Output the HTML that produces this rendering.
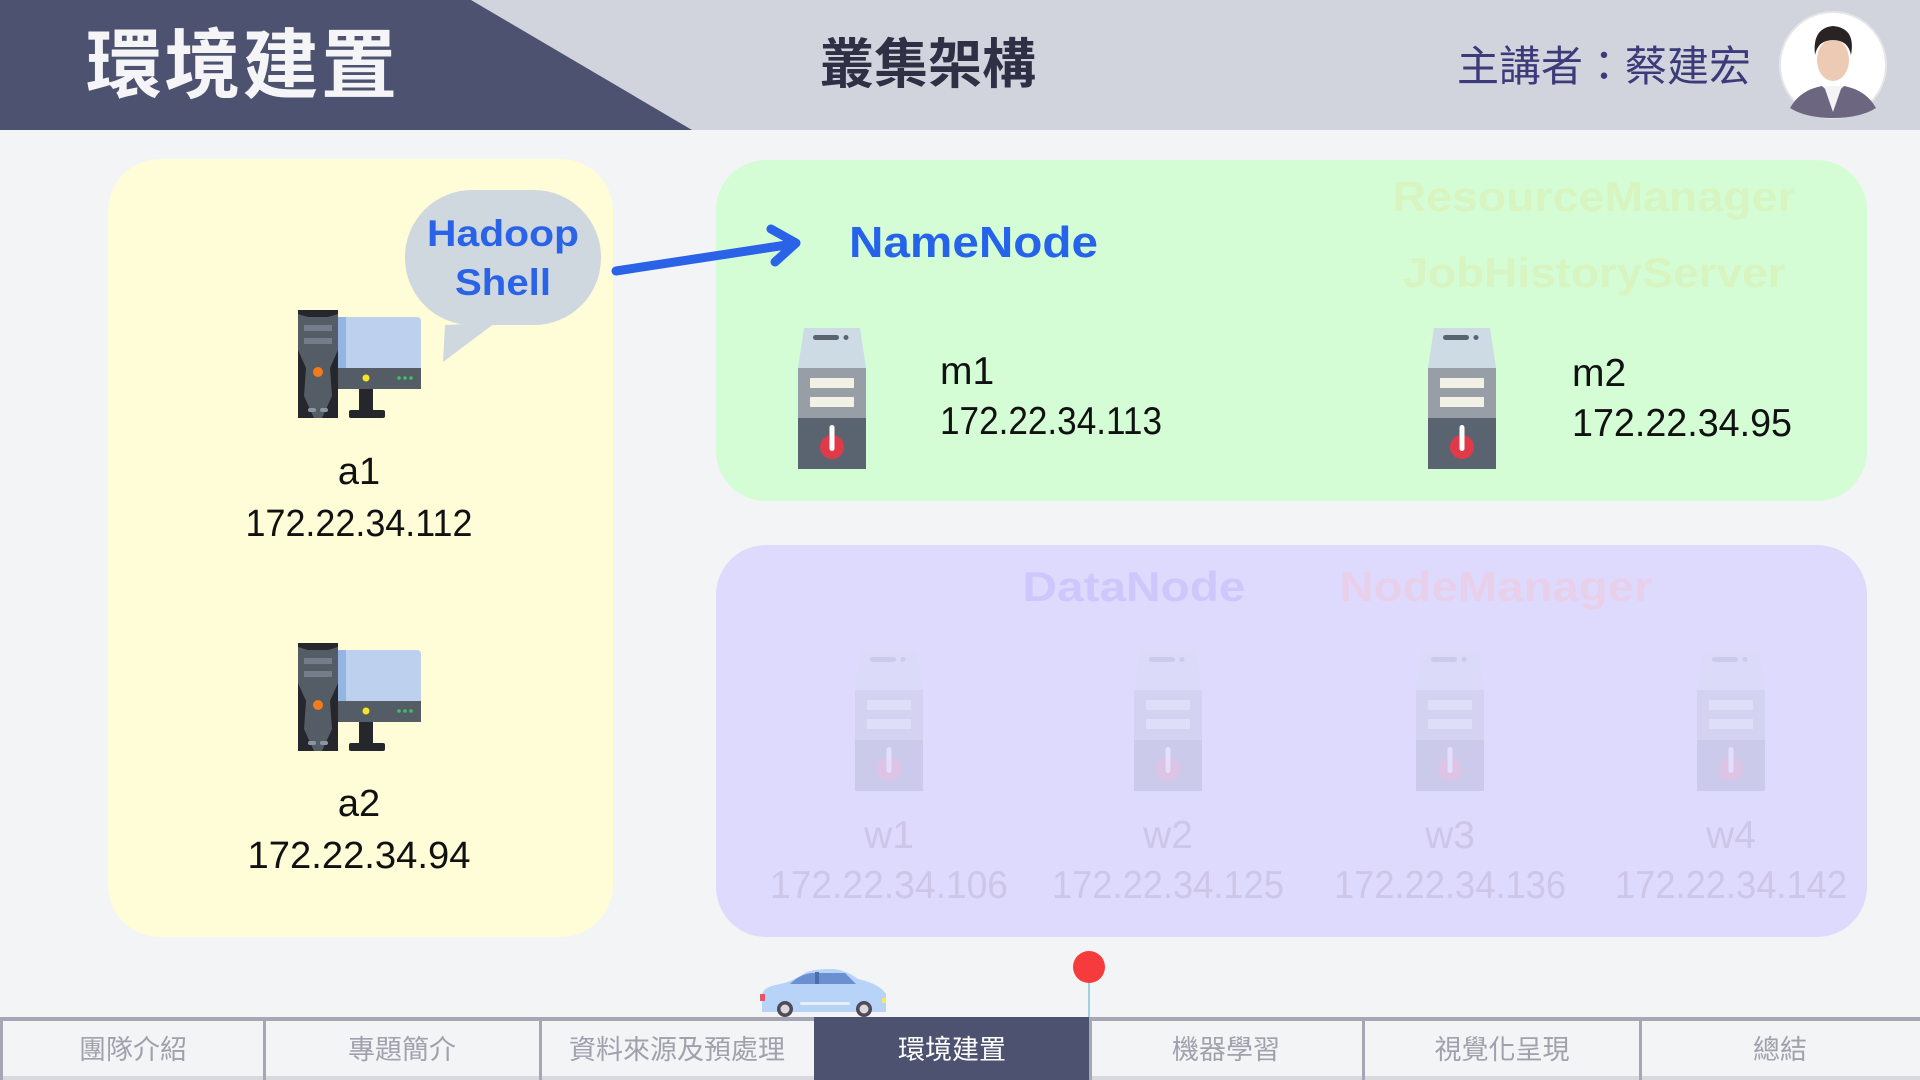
<!DOCTYPE html>
<html><head><meta charset="utf-8"><style>
html,body{margin:0;padding:0;width:1920px;height:1080px;overflow:hidden;background:#f3f4f6}
svg{display:block}
.cjk{font-family:"Liberation Sans","Noto Sans CJK TC",sans-serif}
.lat{font-family:"Liberation Sans",sans-serif}
</style></head><body>
<svg width="1920" height="1080" viewBox="0 0 1920 1080" xmlns="http://www.w3.org/2000/svg">
<defs>
<symbol id="srv" viewBox="0 0 68 141">
<path d="M6 0H62L68 40H0Z" fill="#cddbe4"/>
<rect x="15" y="7" width="26" height="5" rx="2.5" fill="#5a6370"/>
<circle cx="48" cy="9.5" r="2.5" fill="#5a6370"/>
<rect x="0" y="40" width="68" height="50" fill="#979ea6"/>
<rect x="12" y="50" width="44" height="10" fill="#f1f1e6"/>
<rect x="12" y="69" width="44" height="10" fill="#f1f1e6"/>
<rect x="0" y="90" width="68" height="51" fill="#5a6370"/>
<circle cx="34" cy="119" r="12" fill="#e03a48"/>
<rect x="31.5" y="97" width="5" height="26" rx="2.5" fill="#fff"/>
</symbol>
<symbol id="pc" viewBox="0 0 123 108">
<rect x="40" y="7" width="83" height="72" rx="4" fill="#bdd0ee"/>
<rect x="40" y="7" width="8" height="52" fill="#94b4e2"/>
<rect x="40" y="58" width="83" height="21" fill="#545c66"/>
<circle cx="68" cy="68" r="3.5" fill="#f5e52a"/>
<circle cx="101" cy="68" r="1.8" fill="#3fc06a"/><circle cx="107" cy="68" r="1.8" fill="#3fc06a"/><circle cx="113" cy="68" r="1.8" fill="#3fc06a"/>
<rect x="61" y="79" width="14" height="21" fill="#25272c"/>
<rect x="51" y="100" width="36" height="8" rx="2" fill="#25272c"/>
<rect x="0" y="0" width="40" height="108" rx="2" fill="#545c66"/>
<path d="M0 0H40V4L30 7H10L0 4Z" fill="#25272c"/>
<path d="M0 40L8 58L6 86L16 108H0Z" fill="#25272c"/>
<path d="M40 40L32 58L34 86L24 108H40Z" fill="#25272c"/>
<rect x="6" y="15" width="28" height="6" fill="#747d89"/>
<rect x="6" y="28" width="28" height="6" fill="#747d89"/>
<circle cx="20" cy="62" r="5" fill="#f57a1c"/>
<rect x="10" y="98" width="8" height="4" rx="2" fill="#8c95a3"/><rect x="22" y="98" width="8" height="4" rx="2" fill="#8c95a3"/>
</symbol>
</defs>

<rect x="0" y="0" width="1920" height="130" fill="#d1d4dc"/>
<path d="M0 0H471L692 130H0Z" fill="#4d5270"/>
<text x="86" y="92" class="cjk" font-size="76" font-weight="bold" fill="#f5f5f7" textLength="313" letter-spacing="2">環境建置</text>
<text x="928" y="83" class="cjk" font-size="54" font-weight="bold" fill="#2f2f45" text-anchor="middle">叢集架構</text>
<text x="1457" y="81" class="cjk" font-size="42" fill="#3d3a7a">主講者：蔡建宏</text>
<circle cx="1833" cy="65" r="53" fill="#ffffff" stroke="#e6e6ea" stroke-width="2"/>
<path d="M1790 108Q1800 90 1822 86L1833 96L1844 86Q1866 90 1876 108Q1860 118 1833 118Q1806 118 1790 108Z" fill="#6d6680"/>
<path d="M1824 86L1833 112L1842 86Z" fill="#f4f4f6"/>
<ellipse cx="1833" cy="60" rx="16" ry="21" fill="#eccab4"/>
<path d="M1815 55Q1812 28 1833 26Q1856 28 1851 55Q1848 40 1833 40Q1818 40 1815 55Z" fill="#2a2324"/>

<rect x="108" y="159" width="505" height="778" rx="52" fill="#fefdd8"/>
<rect x="716" y="160" width="1151" height="341" rx="50" fill="#d4fdd6"/>
<rect x="716" y="545" width="1151" height="392" rx="50" fill="#dedafd"/>

<path d="M445 325L443 362L495 323Z" fill="#cfd8de"/>
<rect x="405" y="190" width="196" height="135" rx="67" fill="#cfd8de"/>
<text x="503" y="246" class="lat" font-size="37" font-weight="bold" fill="#2a63e8" text-anchor="middle" textLength="152" lengthAdjust="spacingAndGlyphs">Hadoop</text>
<text x="503" y="295" class="lat" font-size="37" font-weight="bold" fill="#2a63e8" text-anchor="middle" textLength="96" lengthAdjust="spacingAndGlyphs">Shell</text>
<path d="M616 271L793 244M771 229L796 243L775 262" stroke="#2a63e8" stroke-width="9" fill="none" stroke-linecap="round" stroke-linejoin="round"/>

<use href="#pc" x="298" y="310" width="123" height="108"/>
<text x="359" y="484" class="lat" font-size="38" fill="#111" text-anchor="middle">a1</text>
<text x="359" y="536" class="lat" font-size="38" fill="#111" text-anchor="middle" textLength="227" lengthAdjust="spacingAndGlyphs">172.22.34.112</text>
<use href="#pc" x="298" y="643" width="123" height="108"/>
<text x="359" y="816" class="lat" font-size="38" fill="#111" text-anchor="middle">a2</text>
<text x="359" y="868" class="lat" font-size="38" fill="#111" text-anchor="middle" textLength="223" lengthAdjust="spacingAndGlyphs">172.22.34.94</text>

<text x="849" y="257" class="lat" font-size="44" font-weight="bold" fill="#2563eb" textLength="249" lengthAdjust="spacingAndGlyphs">NameNode</text>
<text x="1594" y="211" class="lat" font-size="42" font-weight="bold" fill="#d8f4c0" text-anchor="middle" textLength="403" lengthAdjust="spacingAndGlyphs">ResourceManager</text>
<text x="1594" y="287" class="lat" font-size="42" font-weight="bold" fill="#d8f4c0" text-anchor="middle" textLength="383" lengthAdjust="spacingAndGlyphs">JobHistoryServer</text>
<use href="#srv" x="798" y="328" width="68" height="141"/>
<text x="940" y="384" class="lat" font-size="39" fill="#111">m1</text>
<text x="940" y="434" class="lat" font-size="39" fill="#111" textLength="222" lengthAdjust="spacingAndGlyphs">172.22.34.113</text>
<use href="#srv" x="1428" y="328" width="68" height="141"/>
<text x="1572" y="386" class="lat" font-size="39" fill="#111">m2</text>
<text x="1572" y="436" class="lat" font-size="39" fill="#111" textLength="220" lengthAdjust="spacingAndGlyphs">172.22.34.95</text>

<text x="1134" y="601" class="lat" font-size="42" font-weight="bold" fill="#ccc8fc" text-anchor="middle" textLength="223" lengthAdjust="spacingAndGlyphs">DataNode</text>
<text x="1496" y="601" class="lat" font-size="42" font-weight="bold" fill="#e8d0ea" text-anchor="middle" textLength="313" lengthAdjust="spacingAndGlyphs">NodeManager</text>
<g opacity="0.13">
<use href="#srv" x="855" y="650" width="68" height="141"/>
<use href="#srv" x="1134" y="650" width="68" height="141"/>
<use href="#srv" x="1416" y="650" width="68" height="141"/>
<use href="#srv" x="1697" y="650" width="68" height="141"/>
</g>
<g class="lat" font-size="39" fill="#cdc6e6" text-anchor="middle" lengthAdjust="spacingAndGlyphs">
<text x="889" y="848">w1</text><text x="889" y="898" textLength="238" lengthAdjust="spacingAndGlyphs">172.22.34.106</text>
<text x="1168" y="848">w2</text><text x="1168" y="898" textLength="232" lengthAdjust="spacingAndGlyphs">172.22.34.125</text>
<text x="1450" y="848">w3</text><text x="1450" y="898" textLength="232" lengthAdjust="spacingAndGlyphs">172.22.34.136</text>
<text x="1731" y="848">w4</text><text x="1731" y="898" textLength="232" lengthAdjust="spacingAndGlyphs">172.22.34.142</text>
</g>

<g transform="translate(0,6)">
<path d="M762 990Q762 982 775 979Q790 977 805 967Q812 963 830 963Q845 963 858 973Q880 978 886 988L886 1006H762Z" fill="#b7d4f8"/>
<path d="M790 978Q800 968 812 967H845L856 978Z" fill="#6b90d2"/>
<rect x="815" y="966" width="4" height="12" fill="#4c6eae"/>
<rect x="800" y="996" width="50" height="3" rx="1.5" fill="#e4efff"/>
<rect x="760" y="988" width="5" height="7" fill="#e8556a"/>
<rect x="882" y="992" width="4" height="5" fill="#f4e76a"/>
<circle cx="785" cy="1003" r="8" fill="#4e4a57"/><circle cx="785" cy="1003" r="4.5" fill="#d9d9de"/>
<circle cx="864" cy="1003" r="8" fill="#4e4a57"/><circle cx="864" cy="1003" r="4.5" fill="#d9d9de"/>
</g>

<rect x="1088" y="975" width="2" height="42" fill="#9fd1dc"/>
<ellipse cx="1089" cy="967" rx="16" ry="16" fill="#f53b3b"/>

<rect x="0" y="1017" width="1920" height="63" fill="#f3f4f6"/>
<rect x="0" y="1017" width="1920" height="4" fill="#a5a7b5"/>
<rect x="0" y="1076" width="1920" height="4" fill="#d8d9de"/>
<rect x="814" y="1017" width="275" height="63" fill="#4d5270"/>
<g fill="#a5a7b5">
<rect x="0" y="1017" width="3" height="63"/>
<rect x="263" y="1017" width="3" height="63"/>
<rect x="539" y="1017" width="3" height="63"/>
<rect x="1089" y="1017" width="3" height="63"/>
<rect x="1362" y="1017" width="3" height="63"/>
<rect x="1639" y="1017" width="3" height="63"/>
</g>
<g class="cjk" font-size="27" fill="#9fa1ad" text-anchor="middle">
<text x="133" y="1059">團隊介紹</text>
<text x="402" y="1059">專題簡介</text>
<text x="677" y="1059">資料來源及預處理</text>
<text x="952" y="1059" fill="#ffffff">環境建置</text>
<text x="1226" y="1059">機器學習</text>
<text x="1502" y="1059">視覺化呈現</text>
<text x="1780" y="1059">總結</text>
</g>
</svg>
</body></html>
